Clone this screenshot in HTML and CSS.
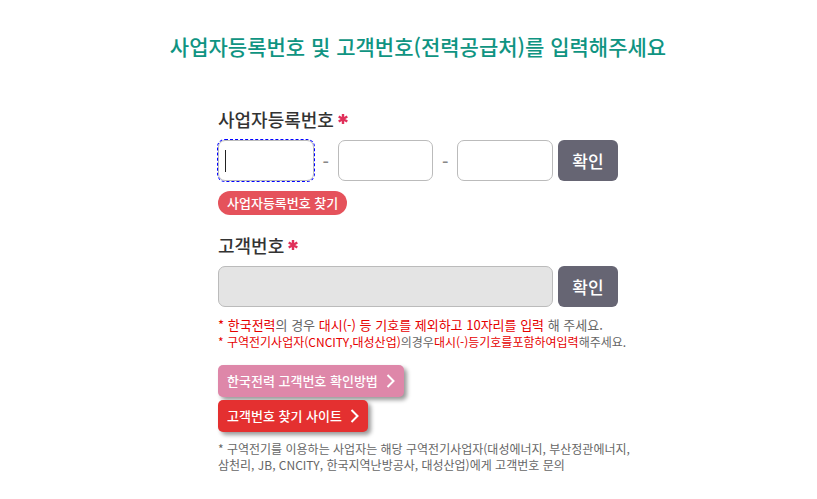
FILE: index.html
```html
<!DOCTYPE html>
<html lang="ko">
<head>
<meta charset="utf-8">
<meta name="viewport" content="width=device-width, initial-scale=1">
<title>사업자등록번호 및 고객번호 입력</title>
<link rel="stylesheet" href="styles.css">
</head>
<body>
<main class="page">
  <h1 class="title">사업자등록번호 및 고객번호(전력공급처)를 입력해주세요</h1>
  <form class="form">
    <section class="group">
      <label class="label" for="biz1">사업자등록번호 <svg class="required" viewBox="0 0 10 10" aria-hidden="true"><path d="M5 0V10M0.7 2.5L9.3 7.5M9.3 2.5L0.7 7.5"/></svg></label>
      <div class="row">
        <div class="number">
          <input class="input current" id="biz1" type="text" maxlength="3">
          <span class="dash">-</span>
          <input class="input" type="text" maxlength="2" aria-label="사업자등록번호 가운데 자리">
          <span class="dash">-</span>
          <input class="input" type="text" maxlength="5" aria-label="사업자등록번호 끝자리">
        </div>
        <button class="confirm" type="button">확인</button>
      </div>
      <a class="pill" href="#">사업자등록번호 찾기</a>
    </section>
    <section class="group">
      <label class="label" for="customer">고객번호 <svg class="required" viewBox="0 0 10 10" aria-hidden="true"><path d="M5 0V10M0.7 2.5L9.3 7.5M9.3 2.5L0.7 7.5"/></svg></label>
      <div class="row">
        <input class="input" id="customer" type="text" disabled>
        <button class="confirm" type="button">확인</button>
      </div>
      <div class="notes">
        <p class="note note-main"><em>* 한국전력</em>의 경우 <em>대시(-) 등 기호를 제외하고 10자리를 입력</em> 해 주세요.</p>
        <p class="note"><em>* 구역전기사업자(CNCITY,대성산업)</em>의경우<em>대시(-)등기호를포함하여입력</em>해주세요.</p>
      </div>
    </section>
    <div class="links">
      <a class="link guide" href="#">한국전력 고객번호 확인방법 <svg class="chevron" viewBox="0 0 10 16" aria-hidden="true"><path d="M1.5 2L7.5 8L1.5 14"/></svg></a>
      <a class="link site" href="#">고객번호 찾기 사이트 <svg class="chevron" viewBox="0 0 10 16" aria-hidden="true"><path d="M1.5 2L7.5 8L1.5 14"/></svg></a>
    </div>
    <p class="note">* 구역전기를 이용하는 사업자는 해당 구역전기사업자(대성에너지, 부산정관에너지,<br>삼천리, JB, CNCITY, 한국지역난방공사, 대성산업)에게 고객번호 문의</p>
  </form>
</main>
</body>
</html>
```
FILE: styles.css
```css
* {
  box-sizing: border-box;
}

body {
  margin: 0;
  background: #fff;
  color: #666;
  font-family: "Noto Sans CJK KR", "Noto Sans", sans-serif;
}

.page {
  padding: 30px 0 16px 19px;
}

.title {
  margin: 0 0 45px;
  color: #0f9482;
  font-size: 21px;
  font-weight: 500;
  line-height: 32px;
  text-align: center;
}

.form {
  max-width: 400px;
  margin: 0 auto;
}

.group {
  display: flex;
  flex-direction: column;
  align-items: flex-start;
  margin-bottom: 18px;
}

.label {
  display: flex;
  align-items: center;
  gap: 4px;
  margin-bottom: 9px;
  color: #333;
  font-size: 18px;
  font-weight: 500;
  line-height: 24px;
}

.required {
  width: 10px;
  height: 10px;
  fill: none;
  stroke: #e0305a;
  stroke-width: 2.4;
}

.row {
  display: flex;
  align-self: stretch;
  gap: 5px;
}

.number {
  display: flex;
  flex: 1;
  min-width: 0;
  align-items: center;
}

.input {
  flex: 1;
  min-width: 0;
  width: 100%;
  height: 41px;
  padding: 0 8px;
  border: 1px solid #bbb;
  border-radius: 7px;
  background: #fff;
  font: inherit;
  font-size: 16px;
}

.input:disabled {
  background: #e4e4e4;
}

.current {
  outline: 1px dashed #00f;
  background: linear-gradient(#222, #222) 6px center / 1px 22px no-repeat #fff;
}

.dash {
  width: 24px;
  color: #888;
  font-size: 18px;
  font-weight: 500;
  line-height: 24px;
  text-align: center;
}

.confirm {
  width: 60px;
  height: 41px;
  padding: 0;
  border: 0;
  border-radius: 6px;
  background: #666573;
  color: #fff;
  font: inherit;
  font-size: 17px;
  font-weight: 500;
}

.pill {
  margin-top: 10px;
  padding: 0 9px;
  border-radius: 12px;
  background: #e5525b;
  color: #fff;
  font-size: 13px;
  font-weight: 500;
  line-height: 24px;
  text-decoration: none;
}

.notes {
  margin-top: 9px;
}

.note {
  margin: 0;
  font-size: 12px;
  line-height: 16px;
  white-space: nowrap;
}

.note-main {
  font-size: 13px;
  line-height: 18px;
}

.note em {
  color: #e60000;
  font-style: normal;
}

.links {
  display: flex;
  flex-direction: column;
  align-items: flex-start;
  gap: 3px;
  margin: -3px 0 9px;
}

.link {
  display: flex;
  align-items: center;
  gap: 8px;
  padding: 0 8px 0 9px;
  border-radius: 5px;
  box-shadow: 3px 3px 4px rgba(0, 0, 0, 0.4);
  color: #fff;
  font-size: 13px;
  font-weight: 500;
  line-height: 32px;
  text-decoration: none;
}

.guide {
  background: #de87a9;
}

.site {
  background: #e43030;
}

.chevron {
  width: 10px;
  height: 16px;
  fill: none;
  stroke: #fff;
  stroke-width: 2;
}
```
